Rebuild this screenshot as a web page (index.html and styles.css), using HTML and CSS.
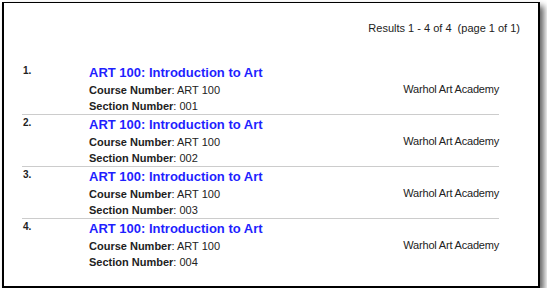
FILE: index.html
```html
<!DOCTYPE html>
<html lang="en">
<head>
    <meta charset="UTF-8" />
    <title>Course Search Results</title>
    <link rel="stylesheet" href="styles.css">
</head>
<body>
    <div class="frame">
        <div class="results-count">
            Results 1 - 4 of 4 &nbsp;(page 1 of 1)
        </div>

        <ol class="result-list">
            <li class="result">
                <span class="result-num">1.</span>
                <div class="result-main">
                    <a class="result-title" href="#">ART 100: Introduction to Art</a>
                    <div class="result-line"><b>Course Number</b>: ART 100</div>
                    <div class="result-line"><b>Section Number</b>: 001</div>
                </div>
                <div class="result-school">Warhol Art Academy</div>
            </li>
            <li class="result">
                <span class="result-num">2.</span>
                <div class="result-main">
                    <a class="result-title" href="#">ART 100: Introduction to Art</a>
                    <div class="result-line"><b>Course Number</b>: ART 100</div>
                    <div class="result-line"><b>Section Number</b>: 002</div>
                </div>
                <div class="result-school">Warhol Art Academy</div>
            </li>
            <li class="result">
                <span class="result-num">3.</span>
                <div class="result-main">
                    <a class="result-title" href="#">ART 100: Introduction to Art</a>
                    <div class="result-line"><b>Course Number</b>: ART 100</div>
                    <div class="result-line"><b>Section Number</b>: 003</div>
                </div>
                <div class="result-school">Warhol Art Academy</div>
            </li>
            <li class="result">
                <span class="result-num">4.</span>
                <div class="result-main">
                    <a class="result-title" href="#">ART 100: Introduction to Art</a>
                    <div class="result-line"><b>Course Number</b>: ART 100</div>
                    <div class="result-line"><b>Section Number</b>: 004</div>
                </div>
                <div class="result-school">Warhol Art Academy</div>
            </li>
        </ol>
    </div>
</body>
</html>
```

FILE: styles.css
```css
body {
    margin: 0;
    background: #fff;
    font-family: 'Liberation Sans', Arial, sans-serif;
    color: #222;
}
.frame {
    margin: 2px 0 0 2px;
    width: 534px;
    height: 283px;
    border: 1px solid #000;
    border-width: 1px 2px 2px 2px;
    background: #fff;
    box-shadow: 4px 4px 6px rgba(0, 0, 0, 0.6);
}
.results-count {
    text-align: right;
    font-size: 11px;
    line-height: 14px;
    padding: 18px 18px 0 0;
}
.result-list {
    list-style: none;
    margin: 28px 0 0 18px;
    padding: 0;
    width: 477px;
}
.result {
    display: grid;
    grid-template-columns: 67px 1fr auto;
    padding: 1px 0 0;
    border-top: 1px solid #ccc;
}
.result:first-child {
    border-top: none;
}
.result-num {
    font-size: 10px;
    font-weight: bold;
    line-height: 12px;
    padding-top: 1px;
    padding-left: 1px;
}
.result-title {
    display: block;
    color: #1f1fff;
    font-size: 13px;
    font-weight: bold;
    line-height: 18px;
    text-decoration: none;
}
.result-line {
    font-size: 11px;
    line-height: 16px;
}
.result-school {
    font-size: 11px;
    line-height: 14px;
    padding-top: 18px;
    letter-spacing: -0.2px;
}
```
